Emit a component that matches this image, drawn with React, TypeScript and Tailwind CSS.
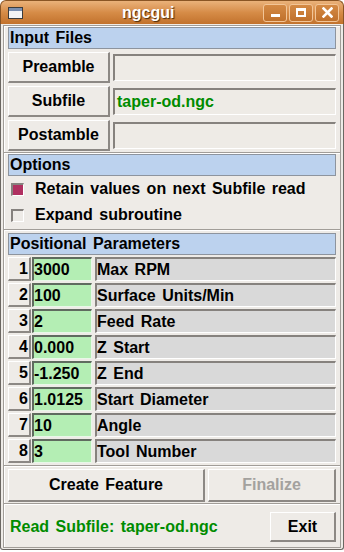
import React from "react";

const FONT = { fontFamily: '"Liberation Sans", Arial, Helvetica, sans-serif' };

const raised =
  "bg-[#eeebe7] border-t border-l border-t-white border-l-white border-b-2 border-r-2 border-b-[#8c8884] border-r-[#8c8884]";
const sunken =
  "border-t-2 border-l-2 border-t-[#86827e] border-l-[#86827e] border-b border-r border-b-white border-r-white";

function Header({ children }: { children: React.ReactNode }) {
  return (
    <div className="h-[22px] bg-[#bcd2ee] border border-[#8d949e] flex items-center pl-[1px] text-black">
      {children}
    </div>
  );
}

function Separator() {
  return <div className="-mx-[4px] h-[2px] border-t border-t-[#a19d98] border-b border-b-white" />;
}

function FileRow({ label, value, className }: { label: string; value?: string; className?: string }) {
  return (
    <div className={"flex items-center h-[31px] " + (className ?? "")}>
      <div className={"w-[102px] h-[31px] flex items-center justify-center text-black " + raised}>{label}</div>
      <div className={"ml-[3px] flex-1 h-[27px] bg-[#eeebe6] flex items-center pl-[2px] text-[#008c00] " + sunken}>
        {value}
      </div>
    </div>
  );
}

const params: [string, string][] = [
  ["3000", "Max RPM"],
  ["100", "Surface Units/Min"],
  ["2", "Feed Rate"],
  ["0.000", "Z Start"],
  ["-1.250", "Z End"],
  ["1.0125", "Start Diameter"],
  ["10", "Angle"],
  ["3", "Tool Number"],
];

export default function App() {
  return (
    <div className="w-[344px] h-[552px] bg-white text-[16px] font-bold leading-none [word-spacing:2px]" style={FONT}>
      <div className="w-[344px] h-[550px] flex flex-col">
        {/* Title bar */}
        <div className="h-[24px] rounded-t-[6px] border border-b-0 border-[#8a5524] bg-gradient-to-b from-[#eab27a] via-[#d68c47] to-[#c2722c] flex items-center relative">
          <div className="ml-[7px] w-[15px] h-[12px] bg-white border border-[#3c3c3c] flex flex-col">
            <div className="h-[3px] bg-[#7b8fb0]" />
            <div className="flex-1 bg-[#f4f4f4]" />
          </div>
          <div className="absolute left-[121px] top-[4px] text-white text-[16px] [text-shadow:1px_1px_1px_#4a2a0a]">
            ngcgui
          </div>
          <div className="ml-auto mr-[4px] flex gap-[2px]">
            <div className="w-[24px] h-[18px] rounded-[3px] border border-[#f2c597] bg-gradient-to-b from-[#d48a45] to-[#c0712b] flex items-end justify-center pb-[4px]">
              <div className="w-[9px] h-[3px] bg-white" />
            </div>
            <div className="w-[24px] h-[18px] rounded-[3px] border border-[#f2c597] bg-gradient-to-b from-[#d48a45] to-[#c0712b] flex items-center justify-center">
              <div className="w-[10px] h-[9px] border-2 border-white border-t-[3px]" />
            </div>
            <div className="w-[24px] h-[18px] rounded-[3px] border border-[#f2c597] bg-gradient-to-b from-[#d48a45] to-[#c0712b] flex items-center justify-center">
              <svg width="11" height="11" viewBox="0 0 11 11">
                <path d="M1.5 1.5 L9.5 9.5 M9.5 1.5 L1.5 9.5" stroke="white" strokeWidth="2.6" strokeLinecap="square" />
              </svg>
            </div>
          </div>
        </div>

        {/* Body */}
        <div className="flex-1 bg-[#eeebe7] border border-t-0 border-[#6b6762] rounded-b-[3px] px-[2px] pt-[1px] pb-[1px] flex flex-col">
          <div className="flex-1 border border-[#a19d98] shadow-[inset_1px_1px_0_white] px-[4px] pt-[1px] flex flex-col">
            {/* Input Files */}
            <Header>Input Files</Header>
            <FileRow label="Preamble" className="mt-[3px]" />
            <FileRow label="Subfile" value="taper-od.ngc" className="mt-[3px]" />
            <FileRow label="Postamble" className="mt-[3px]" />
            <div className="mt-[1px]" />
            <Separator />

            {/* Options */}
            <Header>Options</Header>
            <div className="h-[26px] flex items-center pl-[3px]">
              <div className="w-[13px] h-[13px] border-t-2 border-l-2 border-t-[#86827e] border-l-[#86827e] border-b border-r border-b-white border-r-white bg-[#b03060]" />
              <span className="ml-[11px] text-black">Retain values on next Subfile read</span>
            </div>
            <div className="h-[26px] flex items-center pl-[3px]">
              <div className="w-[13px] h-[13px] border-t-2 border-l-2 border-t-[#86827e] border-l-[#86827e] border-b border-r border-b-white border-r-white bg-[#eeebe7]" />
              <span className="ml-[11px] text-black">Expand subroutine</span>
            </div>
            <div className="mt-[1px]" />
            <Separator />

            {/* Positional parameters */}
            <div className="mt-[2px]" />
            <Header>Positional Parameters</Header>
            <div className="mt-[2px] flex flex-col gap-[2px]">
              {params.map(([v, l], i) => (
                <div key={i} className="flex h-[24px]">
                  <div className={"w-[23px] h-[24px] flex items-center justify-end pr-[1px] text-black " + raised}>{i + 1}</div>
                  <div className="ml-[1px] w-[60px] h-[24px] bg-[#b4eeb4] border-t-2 border-l-2 border-t-[#5f6b5f] border-l-[#5f6b5f] border-b border-r border-b-[#e8f8e8] border-r-[#e8f8e8] flex items-center text-black">
                    {v}
                  </div>
                  <div className={"ml-[3px] flex-1 h-[24px] bg-[#d9d9d9] flex items-center text-black " + sunken}>{l}</div>
                </div>
              ))}
            </div>
            <div className="mt-[2px]" />
            <Separator />

            {/* Buttons */}
            <div className="mt-[2px] flex h-[33px]">
              <div className={"w-[197px] h-[33px] flex items-center justify-center text-black " + raised}>Create Feature</div>
              <div className={"ml-[3px] flex-1 h-[33px] flex items-center justify-center text-[#a3a19e] " + raised}>Finalize</div>
            </div>
            <div className="mt-[1px]" />
            <Separator />

            {/* Status */}
            <div className="flex-1 flex items-center pt-[2px]">
              <span className="ml-[2px] text-[#008c00]">Read Subfile: taper-od.ngc</span>
              <div className={"ml-auto w-[66px] h-[30px] flex items-center justify-center text-black " + raised}>Exit</div>
            </div>
          </div>
        </div>
      </div>
    </div>
  );
}
